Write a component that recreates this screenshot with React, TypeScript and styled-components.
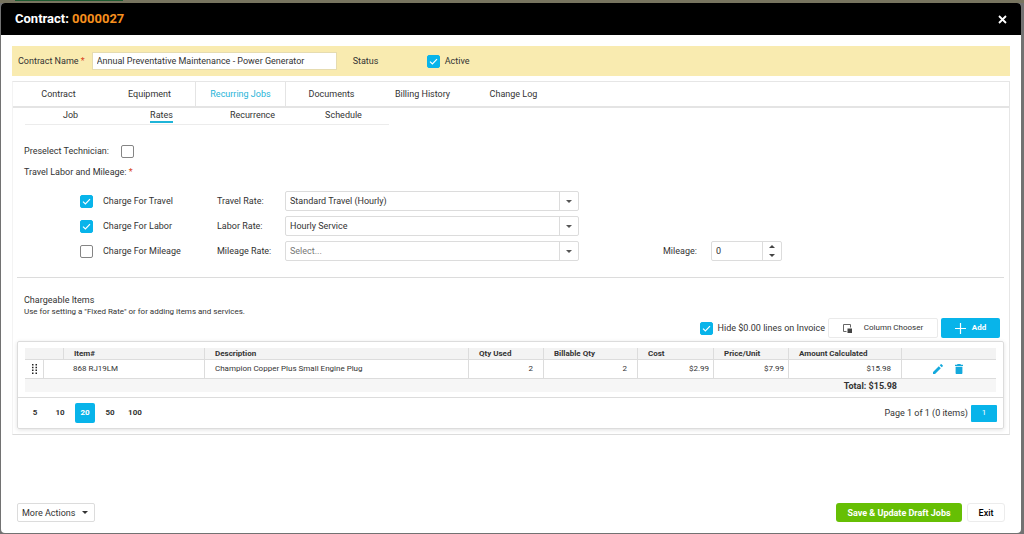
import React, { useState } from "react";
import styled, { createGlobalStyle, css } from "styled-components";

const blue = "#08b4ea";
const line = "#dcdcdc";

const GlobalStyle = createGlobalStyle`
  *, *::before, *::after { box-sizing: border-box; }
  body {
    margin: 0;
    font-family: Roboto, "Liberation Sans", sans-serif;
    font-size: 9px;
    line-height: 12px;
    color: #333;
    background: #727272;
  }
  button, input, select { font: inherit; color: inherit; margin: 0; padding: 0; }
  button { cursor: pointer; background: none; border: 0; }
`;

const Backdrop = styled.div`
  min-height: 100vh;
  display: flex;
  padding: 3px 3px 1px 1px;
  background:
    linear-gradient(#1d5a30, #1d5a30) 15px 0 / 108px 1px no-repeat,
    linear-gradient(#77745f, #77745f) 0 0 / 100% 3px no-repeat,
    #727272;
`;

const Dialog = styled.section`
  flex: 1;
  min-width: 0;
  display: flex;
  flex-direction: column;
  background: #fff;
  border-radius: 4px;
  overflow: hidden;
`;

const TitleBar = styled.header`
  display: flex;
  align-items: center;
  justify-content: space-between;
  height: 32px;
  padding: 0 14px;
  background: #000;
  color: #fff;
`;

const Title = styled.h1`
  margin: 0;
  font-size: 13px;
  line-height: 16px;
  font-weight: 700;
  span { color: #f7901e; }
`;

const CloseButton = styled.button`
  display: flex;
  color: #fff;
`;

const Body = styled.main`
  padding: 11px 11px 0;
`;

const SummaryBar = styled.div`
  display: flex;
  align-items: center;
  height: 30px;
  padding: 0 6px;
  background: #f9ebb0;
`;

const Label = styled.label`
  white-space: nowrap;
`;

const Required = styled.span`
  color: #d9431e;
`;

const NameInput = styled.input`
  width: 245px;
  height: 18px;
  margin: 0 16px 0 7px;
  padding: 0 4px;
  border: 1px solid #e6dcb0;
  background: #fff;
  outline: 0;
`;

const StatusLabel = styled.span`
  width: 74px;
`;

const CheckLabel = styled.label<{ $gap?: number }>`
  display: flex;
  align-items: center;
  gap: ${(p) => p.$gap ?? 5}px;
`;

const CheckWrap = styled.span`
  display: inline-grid;
  flex: none;
  > * { grid-area: 1 / 1; }
  svg { pointer-events: none; visibility: hidden; }
  input:checked + svg { visibility: visible; }
`;

const CheckInput = styled.input`
  appearance: none;
  width: 13px;
  height: 13px;
  border: 1px solid #858585;
  border-radius: 2px;
  background: #fff;
  &:checked { background: ${blue}; border-color: ${blue}; }
`;

const TabPanel = styled.div`
  margin-top: 5px;
  border: 1px solid #e6e6e6;
  border-left-color: #f3f3f3;
  border-bottom-color: ${line};
`;

const Tabs = styled.nav`
  display: flex;
  height: 26px;
  border-bottom: 2px solid #e4e4e4;
`;

const Tab = styled.button<{ $active?: boolean }>`
  width: 91px;
  border: 0 solid #e4e4e4;
  ${(p) => p.$active && css`
    color: #1fb4d8;
    border-width: 0 1px;
  `}
`;

const SubTabs = styled.nav`
  display: flex;
  width: 364px;
  height: 17px;
  margin-left: 12px;
  border-bottom: 1px solid #ececec;
`;

const SubTab = styled.button<{ $active?: boolean }>`
  flex: 1;
  display: flex;
  justify-content: center;
  align-items: flex-start;
  padding-top: 1px;
  span {
    height: 14px;
    border-bottom: 2px solid ${(p) => (p.$active ? "#1fb4d8" : "transparent")};
  }
`;

const Form = styled.form`
  padding: 18px 11px 0;
`;

const Preselect = styled.div`
  display: flex;
  align-items: center;
  gap: 12px;
  height: 16px;
`;

const GroupTitle = styled.div`
  margin-top: 7px;
`;

const RateGrid = styled.div`
  display: grid;
  grid-template-columns: 137px 68px minmax(120px, 294px) 84px auto;
  grid-auto-rows: 20px;
  gap: 5px 0;
  align-items: center;
  margin-top: 13px;
  padding-left: 56px;
`;

const SelectBox = styled.span`
  display: grid;
  grid-template-columns: 1fr 19px;
  grid-column: 3;
  height: 20px;
  border: 1px solid ${line};
  border-radius: 2px;
`;

const SelectInput = styled.select<{ $empty?: boolean }>`
  grid-area: 1 / 1 / 2 / 3;
  appearance: none;
  width: 100%;
  padding: 0 23px 0 4px;
  border: 0;
  background: transparent;
  outline: 0;
  color: ${(p) => (p.$empty ? "#777" : "#333")};
`;

const SelectArrow = styled.span`
  grid-area: 1 / 2;
  display: flex;
  align-items: center;
  justify-content: center;
  border-left: 1px solid ${line};
  color: #555;
  pointer-events: none;
`;

const MileageField = styled.div`
  grid-row: 3;
  grid-column: 5;
  display: flex;
  align-items: center;
  gap: 14px;
`;

const NumberBox = styled.span`
  display: flex;
  width: 71px;
  height: 20px;
  border: 1px solid ${line};
  border-radius: 2px;
`;

const NumberInput = styled.input`
  flex: 1;
  min-width: 0;
  padding: 0 4px;
  border: 0;
  outline: 0;
  background: none;
`;

const Spinner = styled.span`
  display: flex;
  flex-direction: column;
  width: 19px;
  border-left: 1px solid ${line};
  color: #444;
  button {
    flex: 1;
    display: flex;
    align-items: center;
    justify-content: center;
  }
`;

const Divider = styled.hr`
  margin: 16px 5px 0 4px;
  border: 0;
  border-top: 1px solid ${line};
`;

const Items = styled.section`
  padding: 16px 5px 5px 4px;
`;

const ItemsTitle = styled.h2`
  margin: 0 0 0 7px;
  font-size: 9px;
  line-height: 12px;
  font-weight: 400;
`;

const ItemsHint = styled.p`
  margin: 0 0 0 7px;
  font-size: 8px;
  line-height: 12px;
`;

const Toolbar = styled.div`
  display: flex;
  justify-content: flex-end;
  align-items: center;
  gap: 3px;
  padding-right: 4px;
`;

const OutlineButton = styled.button`
  display: flex;
  align-items: center;
  justify-content: center;
  gap: 12px;
  width: 110px;
  height: 20px;
  border: 1px solid #eaeaea;
  border-radius: 2px;
  font-size: 8px;
`;

const AddButton = styled.button`
  display: flex;
  align-items: center;
  justify-content: center;
  gap: 6px;
  width: 59px;
  height: 20px;
  border-radius: 2px;
  background: ${blue};
  color: #fff;
  font-size: 8px;
  font-weight: 700;
`;

const GridCard = styled.div`
  margin-top: 3px;
  border: 1px solid ${line};
  border-radius: 2px;
  box-shadow: 0 1px 4px rgba(0, 0, 0, 0.12);
`;

const Table = styled.table`
  width: calc(100% - 14px);
  margin: 6px 7px 5px;
  border-collapse: separate;
  border-spacing: 0;
  table-layout: fixed;
  font-size: 8px;
  line-height: 10px;
`;

const Th = styled.th<{ $rule?: boolean }>`
  height: 12px;
  padding: 0 10px;
  background: #f3f3f3;
  border-bottom: 1px solid ${line};
  border-left: ${(p) => (p.$rule === false ? "0" : `1px solid ${line}`)};
  text-align: left;
  font-weight: 700;
  white-space: nowrap;
`;

const Td = styled.td<{ $rule?: boolean; $end?: number }>`
  height: 19px;
  padding: 0 ${(p) => p.$end ?? 10}px 0 10px;
  border-bottom: 1px solid ${line};
  border-left: ${(p) => (p.$rule === false ? "0" : `1px solid ${line}`)};
  text-align: ${(p) => (p.$end === undefined ? "left" : "right")};
`;

const HandleCell = styled.td`
  padding: 0;
  border-bottom: 1px solid ${line};
  text-align: center;
  svg { display: block; margin: 0 auto; }
`;

const FootTd = styled.td`
  height: 13px;
  padding: 0 4px 0 0;
  background: #f6f6f6;
  text-align: right;
  font-size: 9px;
  font-weight: 700;
`;

const RowActions = styled.div`
  display: flex;
  justify-content: center;
  gap: 12px;
  padding-right: 2px;
  button { display: flex; color: #14a9dc; }
`;

const Pager = styled.div`
  display: flex;
  align-items: center;
  justify-content: space-between;
  height: 31px;
  padding: 0 6px 0 7px;
  border-top: 1px solid ${line};
`;

const PageSizes = styled.div`
  display: flex;
  gap: 5px;
`;

const PageSize = styled.button<{ $active?: boolean }>`
  width: 20px;
  height: 20px;
  border-radius: 2px;
  font-size: 8px;
  font-weight: 700;
  ${(p) => p.$active && css`
    background: ${blue};
    color: #fff;
  `}
`;

const PageInfo = styled.div`
  display: flex;
  align-items: center;
  gap: 3px;
`;

const PageNumber = styled.button`
  width: 26px;
  height: 17px;
  border-radius: 1px;
  background: ${blue};
  color: #fff;
  font-size: 8px;
`;

const Footer = styled.footer`
  display: flex;
  align-items: center;
  gap: 5px;
  margin-top: auto;
  padding: 16px 16px 11px;
`;

const MoreButton = styled.button`
  display: flex;
  align-items: center;
  justify-content: space-between;
  width: 78px;
  height: 19px;
  margin-right: auto;
  padding: 0 6px 0 4px;
  border: 1px solid ${line};
  border-radius: 2px;
`;

const SaveButton = styled.button`
  width: 126px;
  height: 19px;
  border-radius: 3px;
  background: #66bf04;
  color: #fff;
  font-weight: 700;
`;

const ExitButton = styled.button`
  width: 38px;
  height: 19px;
  border: 1px solid #ececec;
  border-radius: 3px;
  color: #000;
  font-weight: 500;
`;

function Caret({ up }: { up?: boolean }) {
  return (
    <svg width="6" height="3" viewBox="0 0 6 3" aria-hidden="true">
      <path d={up ? "M0 3 3 0 6 3z" : "M0 0 3 3 6 0z"} fill="currentColor" />
    </svg>
  );
}

function Tick({ id, on, onChange }: { id?: string; on: boolean; onChange: (v: boolean) => void }) {
  return (
    <CheckWrap>
      <CheckInput id={id} type="checkbox" checked={on} onChange={(e) => onChange(e.target.checked)} />
      <svg width="13" height="13" viewBox="0 0 13 13" fill="none" aria-hidden="true">
        <path d="M3 6.6 5.4 9 10 4.2" stroke="#fff" strokeWidth="1.2" />
      </svg>
    </CheckWrap>
  );
}

function Check({ label, checked = false, gap }: { label: string; checked?: boolean; gap?: number }) {
  const [on, setOn] = useState(checked);
  return (
    <CheckLabel $gap={gap}>
      <Tick on={on} onChange={setOn} />
      {label}
    </CheckLabel>
  );
}

const rates = [
  { id: "travel", check: "Charge For Travel", label: "Travel Rate:", value: "Standard Travel (Hourly)", on: true },
  { id: "labor", check: "Charge For Labor", label: "Labor Rate:", value: "Hourly Service", on: true },
  { id: "mileage", check: "Charge For Mileage", label: "Mileage Rate:", value: "Select...", on: false },
];

const columns = ["Item#", "Description", "Qty Used", "Billable Qty", "Cost", "Price/Unit", "Amount Calculated"];
const columnWidths = [18, 20, 141, undefined, 75, 94, 76, 75, 113, 95];

export default function App() {
  const [preselect, setPreselect] = useState(false);
  const [mileage, setMileage] = useState(0);
  return (
    <>
      <GlobalStyle />
      <Backdrop>
        <Dialog role="dialog" aria-labelledby="dialog-title">
          <TitleBar>
            <Title id="dialog-title">Contract: <span>0000027</span></Title>
            <CloseButton aria-label="Close">
              <svg width="9" height="9" viewBox="0 0 9 9" aria-hidden="true">
                <path d="M1 1 8 8M8 1 1 8" stroke="currentColor" strokeWidth="1.8" />
              </svg>
            </CloseButton>
          </TitleBar>
          <Body>
            <SummaryBar>
              <Label htmlFor="contract-name">Contract Name <Required>*</Required></Label>
              <NameInput id="contract-name" defaultValue="Annual Preventative Maintenance - Power Generator" />
              <StatusLabel>Status</StatusLabel>
              <Check label="Active" checked />
            </SummaryBar>
            <TabPanel>
              <Tabs aria-label="Contract sections">
                {["Contract", "Equipment", "Recurring Jobs", "Documents", "Billing History", "Change Log"].map((t) => (
                  <Tab key={t} $active={t === "Recurring Jobs"}>{t}</Tab>
                ))}
              </Tabs>
              <SubTabs aria-label="Recurring job sections">
                {["Job", "Rates", "Recurrence", "Schedule"].map((t) => (
                  <SubTab key={t} $active={t === "Rates"}><span>{t}</span></SubTab>
                ))}
              </SubTabs>
              <Form onSubmit={(e) => e.preventDefault()}>
                <Preselect>
                  <Label htmlFor="preselect">Preselect Technician:</Label>
                  <Tick id="preselect" on={preselect} onChange={setPreselect} />
                </Preselect>
                <GroupTitle>Travel Labor and Mileage: <Required>*</Required></GroupTitle>
                <RateGrid>
                  {rates.map((r) => (
                    <React.Fragment key={r.id}>
                      <Check label={r.check} checked={r.on} gap={10} />
                      <Label htmlFor={r.id}>{r.label}</Label>
                      <SelectBox>
                        <SelectInput id={r.id} $empty={!r.on} defaultValue={r.value}>
                          <option>{r.value}</option>
                        </SelectInput>
                        <SelectArrow><Caret /></SelectArrow>
                      </SelectBox>
                      {r.id !== "mileage" && <><span /><span /></>}
                    </React.Fragment>
                  ))}
                  <MileageField>
                    <Label htmlFor="mileage-value">Mileage:</Label>
                    <NumberBox>
                      <NumberInput
                        id="mileage-value"
                        inputMode="numeric"
                        value={mileage}
                        onChange={(e) => setMileage(Number(e.target.value) || 0)}
                      />
                      <Spinner>
                        <button type="button" aria-label="Increase mileage" onClick={() => setMileage(mileage + 1)}><Caret up /></button>
                        <button type="button" aria-label="Decrease mileage" onClick={() => setMileage(Math.max(0, mileage - 1))}><Caret /></button>
                      </Spinner>
                    </NumberBox>
                  </MileageField>
                </RateGrid>
              </Form>
              <Divider />
              <Items>
                <ItemsTitle>Chargeable Items</ItemsTitle>
                <ItemsHint>Use for setting a "Fixed Rate" or for adding items and services.</ItemsHint>
                <Toolbar>
                  <Check label="Hide $0.00 lines on Invoice" checked />
                  <OutlineButton>
                    <svg width="9" height="9" viewBox="0 0 9 9" aria-hidden="true">
                      <path d="M3.5 7.5h-3v-7h7v3" fill="none" stroke="#666" />
                      <path d="M4.5 4.5H9V9H4.5z" fill="#444" />
                    </svg>
                    Column Chooser
                  </OutlineButton>
                  <AddButton>
                    <svg width="11" height="11" viewBox="0 0 11 11" aria-hidden="true">
                      <path d="M5.5 0v11M0 5.5h11" stroke="#fff" strokeWidth="1.2" />
                    </svg>
                    Add
                  </AddButton>
                </Toolbar>
                <GridCard>
                  <Table>
                    <colgroup>
                      {columnWidths.map((w, i) => <col key={i} width={w} />)}
                    </colgroup>
                    <thead>
                      <tr>
                        <Th colSpan={2} $rule={false} />
                        {columns.map((c) => <Th key={c} scope="col">{c}</Th>)}
                        <Th />
                      </tr>
                    </thead>
                    <tbody>
                      <tr>
                        <HandleCell>
                          <svg width="5" height="10" viewBox="0 0 5 10" fill="#222" aria-hidden="true">
                            <path d="M0 0h1.5v1.5H0zM3.5 0H5v1.5H3.5zM0 2.8h1.5v1.5H0zM3.5 2.8H5v1.5H3.5zM0 5.6h1.5v1.5H0zM3.5 5.6H5v1.5H3.5zM0 8.4h1.5v1.5H0zM3.5 8.4H5v1.5H3.5z" />
                          </svg>
                        </HandleCell>
                        <Td />
                        <Td $rule={false}>868 RJ19LM</Td>
                        <Td>Champion Copper Plus Small Engine Plug</Td>
                        <Td $end={10}>2</Td>
                        <Td $end={10}>2</Td>
                        <Td $end={4}>$2.99</Td>
                        <Td $end={4}>$7.99</Td>
                        <Td $end={10}>$15.98</Td>
                        <Td>
                          <RowActions>
                            <button aria-label="Edit item">
                              <svg width="10" height="10" viewBox="0 0 10 10" fill="currentColor" aria-hidden="true">
                                <path d="M0 8v2h2l5.8-5.8-2-2zM9.8 2.2a.6.6 0 0 0 0-.8L8.6.2a.6.6 0 0 0-.8 0l-1.1 1.1 2 2z" />
                              </svg>
                            </button>
                            <button aria-label="Delete item">
                              <svg width="8" height="10" viewBox="0 0 8 10" fill="currentColor" aria-hidden="true">
                                <path d="M.6 9c0 .6.4 1 1 1h4.8c.6 0 1-.4 1-1V2.7H.6zM8 .7H6L5.4 0H2.6L2 .7H0v1.2h8z" />
                              </svg>
                            </button>
                          </RowActions>
                        </Td>
                      </tr>
                    </tbody>
                    <tfoot>
                      <tr>
                        <FootTd colSpan={9}>Total: $15.98</FootTd>
                        <FootTd />
                      </tr>
                    </tfoot>
                  </Table>
                  <Pager>
                    <PageSizes>
                      {[5, 10, 20, 50, 100].map((n) => <PageSize key={n} $active={n === 20}>{n}</PageSize>)}
                    </PageSizes>
                    <PageInfo>
                      <span>Page 1 of 1 (0 items)</span>
                      <PageNumber>1</PageNumber>
                    </PageInfo>
                  </Pager>
                </GridCard>
              </Items>
            </TabPanel>
          </Body>
          <Footer>
            <MoreButton>More Actions <Caret /></MoreButton>
            <SaveButton>Save &amp; Update Draft Jobs</SaveButton>
            <ExitButton>Exit</ExitButton>
          </Footer>
        </Dialog>
      </Backdrop>
    </>
  );
}
